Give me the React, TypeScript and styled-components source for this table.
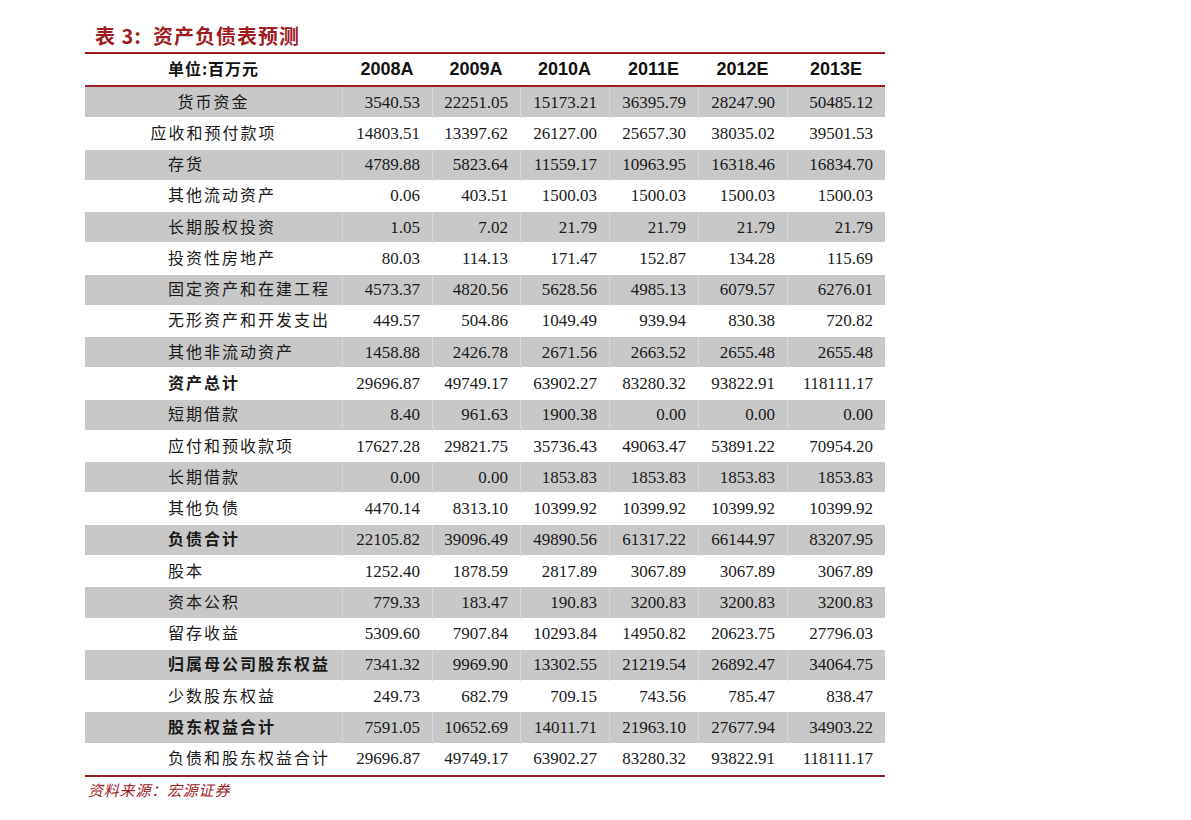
import styled, { createGlobalStyle } from 'styled-components';

const GlobalStyle = createGlobalStyle`
  html, body {
    margin: 0;
    padding: 0;
    background: #fff;
  }
`;

const COLS = '257px 90px 88px 89px 89px 89px 98px';
const RED = '#9e1c1f';

const Page = styled.div`
  width: 1191px;
  height: 820px;
  padding: 22px 0 0 85px;
  box-sizing: border-box;
  background: #fff;
`;

const Title = styled.div`
  height: 30px;
  padding-left: 10px;
  font-family: 'Noto Sans CJK SC', sans-serif;
  font-weight: 700;
  font-size: 20px;
  line-height: 27px;
  letter-spacing: 1px;
  color: ${RED};
  white-space: pre;
`;

const Table = styled.div`
  width: 800px;
  border-top: 2px solid ${RED};
  border-bottom: 2px solid ${RED};
`;

const HeaderRow = styled.div`
  display: grid;
  grid-template-columns: ${COLS};
  height: 31px;
  align-items: center;
  border-bottom: 2px solid ${RED};
`;

const HeadLabel = styled.div`
  text-align: center;
  padding-bottom: 4px;
  font-family: 'Noto Sans CJK SC', sans-serif;
  font-weight: 700;
  font-size: 16px;
  letter-spacing: 1px;
  color: #111;
`;

const HeadYear = styled.div`
  text-align: center;
  font-family: 'Liberation Sans', Arial, sans-serif;
  font-weight: 700;
  font-size: 18px;
  color: #111;
`;

const Row = styled.div<{ $shaded: boolean }>`
  display: grid;
  grid-template-columns: ${COLS};
  height: 31.27px;
  align-items: stretch;
  background: ${({ $shaded }) => ($shaded ? '#c8c8c8' : '#fff')};
  box-shadow: inset 0 -1px 0 #fff;
`;

const Label = styled.div<{ $bold?: boolean; $center?: boolean }>`
  display: flex;
  align-items: center;
  justify-content: ${({ $center }) => ($center ? 'center' : 'flex-start')};
  padding-left: ${({ $center }) => ($center ? '0' : '83px')};
  padding-bottom: 4px;
  font-family: 'Noto Sans CJK SC', serif;
  font-weight: ${({ $bold }) => ($bold ? 700 : 400)};
  font-size: 16px;
  letter-spacing: 2px;
  color: #1a1a1a;
`;

const Num = styled.div<{ $shaded: boolean }>`
  display: flex;
  align-items: center;
  justify-content: flex-end;
  padding-right: 12px;
  font-family: 'Liberation Serif', 'Times New Roman', serif;
  font-size: 17px;
  color: #1a1a1a;
  border-left: 1px solid ${({ $shaded }) => ($shaded ? '#d8d8d8' : 'transparent')};
`;

const Source = styled.div`
  margin-top: 2px;
  padding-left: 3px;
  font-family: 'Noto Sans CJK SC', serif;
  font-style: italic;
  font-size: 15px;
  letter-spacing: 0.8px;
  color: ${RED};
`;

const years = ['2008A', '2009A', '2010A', '2011E', '2012E', '2013E'];

type Line = { name: string; values: string[]; bold?: boolean; center?: boolean };

const rows: Line[] = [
  { name: '货币资金', center: true, values: ['3540.53', '22251.05', '15173.21', '36395.79', '28247.90', '50485.12'] },
  { name: '应收和预付款项', center: true, values: ['14803.51', '13397.62', '26127.00', '25657.30', '38035.02', '39501.53'] },
  { name: '存货', values: ['4789.88', '5823.64', '11559.17', '10963.95', '16318.46', '16834.70'] },
  { name: '其他流动资产', values: ['0.06', '403.51', '1500.03', '1500.03', '1500.03', '1500.03'] },
  { name: '长期股权投资', values: ['1.05', '7.02', '21.79', '21.79', '21.79', '21.79'] },
  { name: '投资性房地产', values: ['80.03', '114.13', '171.47', '152.87', '134.28', '115.69'] },
  { name: '固定资产和在建工程', values: ['4573.37', '4820.56', '5628.56', '4985.13', '6079.57', '6276.01'] },
  { name: '无形资产和开发支出', values: ['449.57', '504.86', '1049.49', '939.94', '830.38', '720.82'] },
  { name: '其他非流动资产', values: ['1458.88', '2426.78', '2671.56', '2663.52', '2655.48', '2655.48'] },
  { name: '资产总计', bold: true, values: ['29696.87', '49749.17', '63902.27', '83280.32', '93822.91', '118111.17'] },
  { name: '短期借款', values: ['8.40', '961.63', '1900.38', '0.00', '0.00', '0.00'] },
  { name: '应付和预收款项', values: ['17627.28', '29821.75', '35736.43', '49063.47', '53891.22', '70954.20'] },
  { name: '长期借款', values: ['0.00', '0.00', '1853.83', '1853.83', '1853.83', '1853.83'] },
  { name: '其他负债', values: ['4470.14', '8313.10', '10399.92', '10399.92', '10399.92', '10399.92'] },
  { name: '负债合计', bold: true, values: ['22105.82', '39096.49', '49890.56', '61317.22', '66144.97', '83207.95'] },
  { name: '股本', values: ['1252.40', '1878.59', '2817.89', '3067.89', '3067.89', '3067.89'] },
  { name: '资本公积', values: ['779.33', '183.47', '190.83', '3200.83', '3200.83', '3200.83'] },
  { name: '留存收益', values: ['5309.60', '7907.84', '10293.84', '14950.82', '20623.75', '27796.03'] },
  { name: '归属母公司股东权益', bold: true, values: ['7341.32', '9969.90', '13302.55', '21219.54', '26892.47', '34064.75'] },
  { name: '少数股东权益', values: ['249.73', '682.79', '709.15', '743.56', '785.47', '838.47'] },
  { name: '股东权益合计', bold: true, values: ['7591.05', '10652.69', '14011.71', '21963.10', '27677.94', '34903.22'] },
  { name: '负债和股东权益合计', values: ['29696.87', '49749.17', '63902.27', '83280.32', '93822.91', '118111.17'] },
];

export default function App() {
  return (
    <>
      <GlobalStyle />
      <Page>
        <Title>{'表 3:  资产负债表预测'}</Title>
        <Table>
          <HeaderRow>
            <HeadLabel>单位:百万元</HeadLabel>
            {years.map(y => (
              <HeadYear key={y}>{y}</HeadYear>
            ))}
          </HeaderRow>
          {rows.map((r, i) => {
            const shaded = i % 2 === 0;
            return (
              <Row key={r.name} $shaded={shaded}>
                <Label $bold={r.bold} $center={r.center}>
                  {r.name}
                </Label>
                {r.values.map((v, j) => (
                  <Num key={j} $shaded={shaded}>
                    {v}
                  </Num>
                ))}
              </Row>
            );
          })}
        </Table>
        <Source>资料来源：宏源证券</Source>
      </Page>
    </>
  );
}
